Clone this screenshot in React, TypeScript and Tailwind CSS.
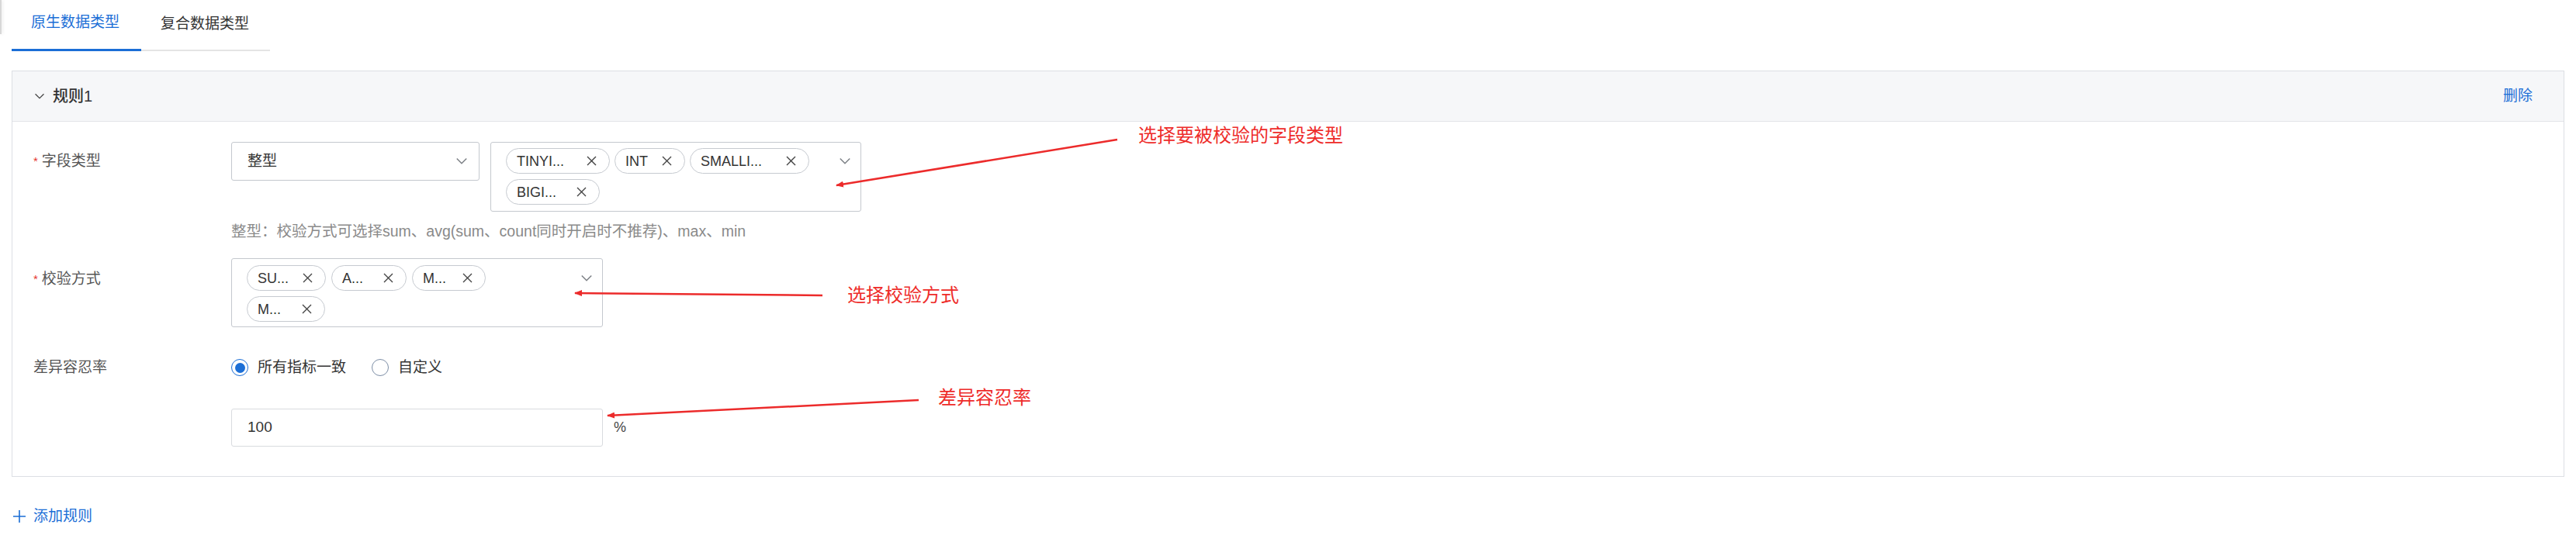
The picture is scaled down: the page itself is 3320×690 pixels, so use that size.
import React from 'react';

const font = { fontFamily: '"Liberation Sans", "Noto Sans CJK SC", sans-serif' };

function Chevron({ className = '', w = 16, color = '#7b7f85' }: { className?: string; w?: number; color?: string }) {
  return (
    <svg width={w} height={w * 0.6} viewBox="0 0 16 10" className={className}>
      <polyline points="1.5,1.5 8,8 14.5,1.5" fill="none" stroke={color} strokeWidth="1.5" />
    </svg>
  );
}

function CloseX() {
  return (
    <svg width="13" height="13" viewBox="0 0 13 13" className="shrink-0">
      <path d="M1 1 L12 12 M12 1 L1 12" stroke="#444" strokeWidth="1.4" fill="none" />
    </svg>
  );
}

function Tag({ label, w }: { label: string; w: string }) {
  return (
    <div className={`flex h-[33px] items-center justify-between rounded-full border border-[#c6cad0] pl-[13px] pr-[16px] text-[18px] leading-none text-[#333] ${w}`}>
      <span>{label}</span>
      <CloseX />
    </div>
  );
}

function Label({ text, required }: { text: string; required?: boolean }) {
  return (
    <div className="flex w-[282px] shrink-0 items-center pl-[27px] text-[19px] leading-[26px] text-[#555]">
      {required && <span className="mr-[5px] text-[15px] text-[#e5322d]">*</span>}
      <span>{text}</span>
    </div>
  );
}

export default function App() {
  return (
    <div className="relative h-[690px] w-[3320px] overflow-hidden bg-white px-[15px]" style={font}>
      {/* stray edge at top left */}
      <div className="absolute left-0 top-0 h-[44px] w-[2px] bg-[#d8d8d8] shadow-[1px_0_4px_rgba(0,0,0,0.12)]" />

      {/* tabs */}
      <div className="flex w-[333px] border-b-2 border-[#e4e4e4]">
        <div className="-mb-[2px] flex h-[66px] w-[167px] items-center border-b-[3px] border-[#1b6ed6] pl-[25px] pb-[4px] text-[19px] text-[#1b6ed6]">
          原生数据类型
        </div>
        <div className="flex h-[64px] w-[166px] items-center pl-[25px] pb-[2px] text-[19px] text-[#333]">
          复合数据类型
        </div>
      </div>

      {/* rule card */}
      <div className="mt-[25px] border border-[#dcdfe4]">
        <div className="flex h-[65px] items-center justify-between border-b border-[#e2e4e8] bg-[#f6f7f9] pl-[28px] pr-[40px]">
          <div className="flex items-center">
            <Chevron className="mr-[10px]" w={14} color="#444" />
            <span className="text-[20px] font-medium text-[#333]">规则1</span>
          </div>
          <span className="text-[19px] text-[#1b6ed6]">删除</span>
        </div>

        <div className="pt-[26px] pb-[38px]">
          {/* 字段类型 */}
          <div className="flex items-start">
            <div className="pt-[12px]">
              <Label text="字段类型" required />
            </div>
            <div className="flex flex-col">
              <div className="flex items-start">
                <div className="flex h-[50px] w-[320px] items-center justify-between rounded-[3px] border border-[#c4c8ce] pl-[20px] pr-[14px] text-[19px] text-[#333]">
                  <span>整型</span>
                  <Chevron />
                </div>
                <div className="ml-[14px] flex h-[90px] w-[478px] items-start rounded-[3px] border border-[#c4c8ce] pl-[19px] pr-[12px] pt-[7px]">
                  <div className="flex w-[426px] flex-wrap gap-x-[6px] gap-y-[7px]">
                    <Tag label="TINYI..." w="w-[134px]" />
                    <Tag label="INT" w="w-[91px]" />
                    <Tag label="SMALLI..." w="w-[154px]" />
                    <Tag label="BIGI..." w="w-[121px]" />
                  </div>
                  <Chevron className="ml-auto mt-[12px]" />
                </div>
              </div>
              <div className="mt-[12px] text-[19.5px] leading-[26px] text-[#8a8a8a]">
                整型：校验方式可选择sum、avg(sum、count同时开启时不推荐)、max、min
              </div>
            </div>
          </div>

          {/* 校验方式 */}
          <div className="mt-[22px] flex items-start">
            <div className="pt-[14px]">
              <Label text="校验方式" required />
            </div>
            <div className="flex h-[89px] w-[479px] items-start rounded-[3px] border border-[#c4c8ce] pl-[19px] pr-[12px] pt-[8px]">
              <div className="flex w-[400px] flex-wrap gap-x-[7px] gap-y-[7px]">
                <Tag label="SU..." w="w-[102px]" />
                <Tag label="A..." w="w-[97px]" />
                <Tag label="M..." w="w-[95px]" />
                <Tag label="M..." w="w-[101px]" />
              </div>
              <Chevron className="ml-auto mt-[12px]" />
            </div>
          </div>

          {/* 差异容忍率 */}
          <div className="mt-[39px] flex items-start">
            <Label text="差异容忍率" />
            <div className="flex flex-col">
              <div className="flex h-[26px] items-center text-[19px] text-[#333]">
                <span className="flex h-[22px] w-[22px] items-center justify-center rounded-full border-[1.5px] border-[#1b6ed6]">
                  <span className="h-[13px] w-[13px] rounded-full bg-[#1b6ed6]" />
                </span>
                <span className="ml-[12px]">所有指标一致</span>
                <span className="ml-[33px] h-[22px] w-[22px] rounded-full border-[1.5px] border-[#7d8ea6]" />
                <span className="ml-[12px]">自定义</span>
              </div>
              <div className="mt-[40px] flex items-center">
                <div className="flex h-[49px] w-[479px] items-center rounded-[3px] border border-[#d9dbdf] pl-[20px] text-[19px] text-[#333]">
                  100
                </div>
                <span className="ml-[14px] text-[18px] text-[#444]">%</span>
              </div>
            </div>
          </div>
        </div>
      </div>

      {/* add rule */}
      <div className="mt-[38px] flex items-center pl-[2px] text-[19px] leading-[26px] text-[#1b6ed6]">
        <svg width="16" height="16" viewBox="0 0 16 16" className="mr-[10px]">
          <path d="M8 0 V16 M0 8 H16" stroke="#1b6ed6" strokeWidth="1.6" />
        </svg>
        <span>添加规则</span>
      </div>

      {/* annotations */}
      <svg className="pointer-events-none absolute left-0 top-0" width="3320" height="690">
        <defs>
          <marker id="ah" markerWidth="10" markerHeight="8" refX="9" refY="4" orient="auto" markerUnits="userSpaceOnUse">
            <path d="M0 0 L10 4 L0 8 Z" fill="#ec2b2b" />
          </marker>
        </defs>
        <line x1="1440" y1="180" x2="1078" y2="239" stroke="#ec2b2b" strokeWidth="2.5" markerEnd="url(#ah)" />
        <line x1="1060" y1="381" x2="741" y2="378" stroke="#ec2b2b" strokeWidth="2.5" markerEnd="url(#ah)" />
        <line x1="1184" y1="516" x2="783" y2="536" stroke="#ec2b2b" strokeWidth="2.5" markerEnd="url(#ah)" />
      </svg>
      <div className="absolute left-[1467px] top-[158px] text-[24px] leading-[34px] text-[#ee2c2a]">选择要被校验的字段类型</div>
      <div className="absolute left-[1092px] top-[364px] text-[24px] leading-[34px] text-[#ee2c2a]">选择校验方式</div>
      <div className="absolute left-[1209px] top-[496px] text-[24px] leading-[34px] text-[#ee2c2a]">差异容忍率</div>
    </div>
  );
}
